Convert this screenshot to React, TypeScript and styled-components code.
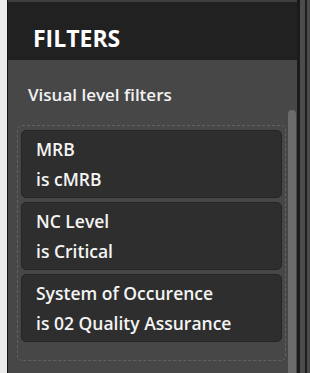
import styled, { createGlobalStyle } from 'styled-components';

const filters = [
  { field: 'MRB', condition: 'is cMRB' },
  { field: 'NC Level', condition: 'is Critical' },
  { field: 'System of Occurence', condition: 'is 02 Quality Assurance' },
];

const GlobalStyle = createGlobalStyle`
  html, body {
    margin: 0;
    padding: 0;
    background: #ebebeb;
  }
`;

const App = () => {
  return (
    <>
      <GlobalStyle />
      <Screen>
        <Gutter />
        <Panel>
          <Header>FILTERS</Header>
          <Body>
            <Content>
              <SectionTitle>Visual level filters</SectionTitle>
              <DropZone>
                {filters.map(({ field, condition }) => (
                  <FilterCard key={field}>
                    <div>{field}</div>
                    <div>{condition}</div>
                  </FilterCard>
                ))}
              </DropZone>
            </Content>
            <ScrollThumb />
          </Body>
        </Panel>
        <Edge $width={3} $color="#1b1b1b" />
        <Edge $width={5} $color="#4c4c4c" />
        <Edge $width={2} $color="#1e1e1e" />
        <Edge $width={3} $color="#4a4a4a" />
      </Screen>
    </>
  );
};

const Screen = styled.div`
  display: flex;
  width: 310px;
  height: 373px;
  overflow: hidden;
  background: #ebebeb;
  font-family: 'Segoe UI', 'Open Sans', 'Noto Sans', sans-serif;
`;

const Gutter = styled.div`
  width: 7px;
  flex-shrink: 0;
  background: #ebebeb;
`;

const Panel = styled.div`
  width: 289px;
  flex-shrink: 0;
  display: flex;
  flex-direction: column;
  background: #474747;
  border-left: 1px solid #111111;
`;

const Header = styled.div`
  height: 60px;
  box-sizing: border-box;
  border-top: 2px solid #3e3e3e;
  background: #212121;
  color: #ffffff;
  font-size: 23px;
  font-weight: 700;
  line-height: 30px;
  padding: 21px 0 0 25px;
`;

const Body = styled.div`
  flex: 1;
  display: flex;
`;

const Content = styled.div`
  flex: 1;
  padding-left: 9px;
`;

const SectionTitle = styled.div`
  box-sizing: border-box;
  height: 65px;
  padding: 24px 0 0 11px;
  color: #f2f2f2;
  font-size: 17px;
  font-weight: 600;
  line-height: 22px;
`;

const DropZone = styled.div`
  display: flex;
  flex-direction: column;
  gap: 4px;
  padding: 4px 3px 18px 3px;
  border: 1px dashed #626262;
  border-radius: 5px;
`;

const FilterCard = styled.div`
  background: #2e2e2e;
  border: 1px solid #252525;
  border-radius: 5px;
  padding: 3px 14px;
  color: #f4f4f4;
  font-size: 17.5px;
  font-weight: 600;
  line-height: 30px;
  white-space: nowrap;
`;

const ScrollThumb = styled.div`
  width: 8px;
  margin: 50px 1px 0 2px;
  background: #6b6b6b;
  border-radius: 4px 4px 0 0;
`;

const Edge = styled.div<{ $width: number; $color: string }>`
  width: ${({ $width }) => $width}px;
  flex-shrink: 0;
  background: ${({ $color }) => $color};
`;

export default App;
